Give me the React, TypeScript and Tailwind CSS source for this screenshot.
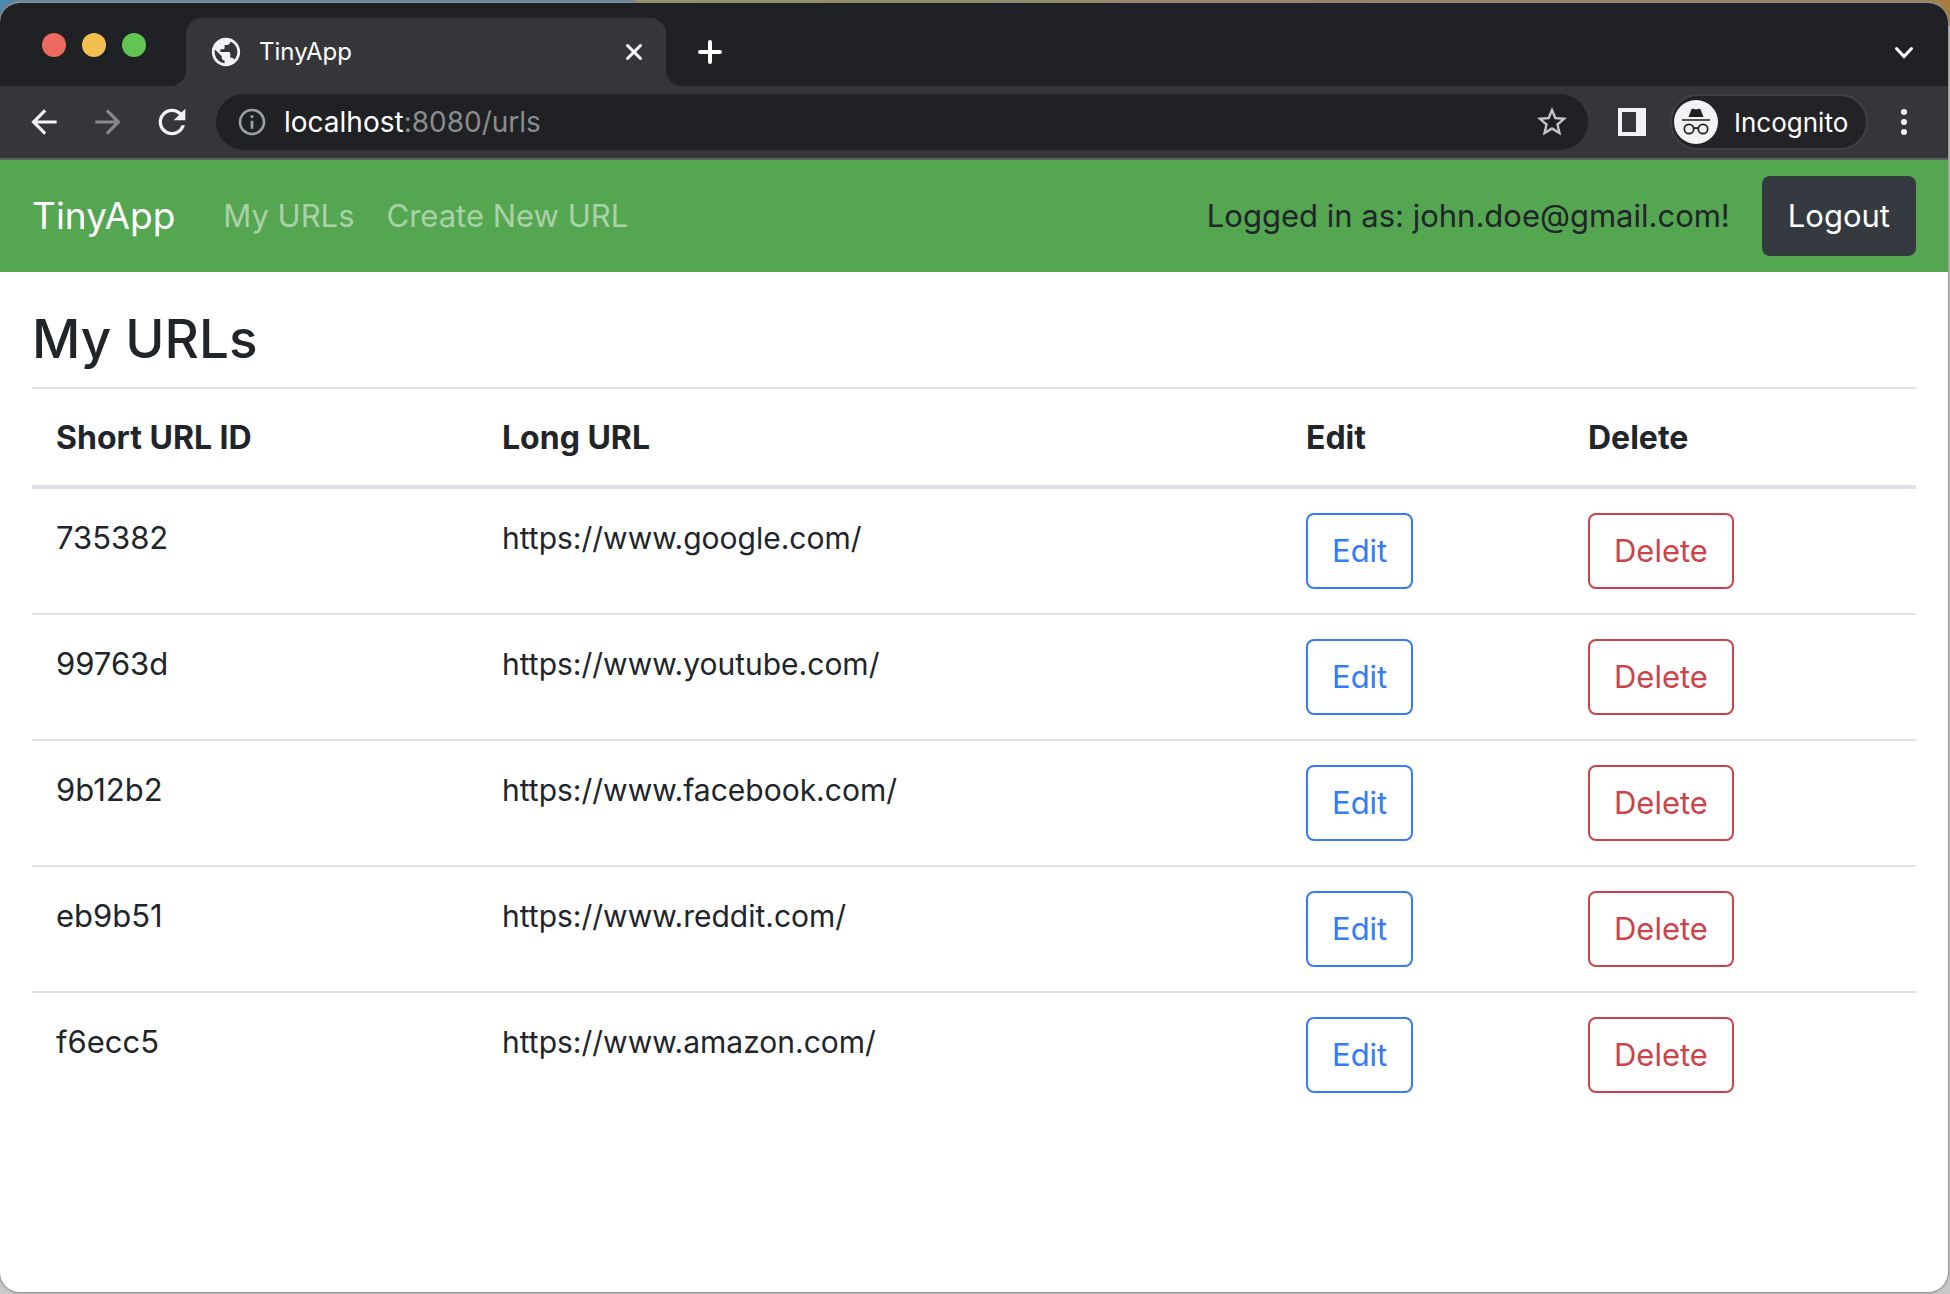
import React from "react";
import { MdPublic, MdArrowBack, MdArrowForward, MdRefresh, MdInfoOutline, MdStarBorder } from "react-icons/md";

const rows = [
  { id: "735382", url: "https://www.google.com/" },
  { id: "99763d", url: "https://www.youtube.com/" },
  { id: "9b12b2", url: "https://www.facebook.com/" },
  { id: "eb9b51", url: "https://www.reddit.com/" },
  { id: "f6ecc5", url: "https://www.amazon.com/" },
];

function TabStrip() {
  return (
    <div className="flex h-[83px] items-stretch bg-[#202124] pr-[27px]">
      <div className="flex w-[170px] items-center gap-4 pl-[42px]">
        <button aria-label="Close window" className="size-6 rounded-full bg-[#ed6a5e]" />
        <button aria-label="Minimize window" className="size-6 rounded-full bg-[#f5bf4f]" />
        <button aria-label="Zoom window" className="size-6 rounded-full bg-[#61c554]" />
      </div>
      <div className="flex w-4 flex-col justify-end">
        <div className="size-4 bg-[#35363a]">
          <div className="size-4 rounded-br-2xl bg-[#202124]" />
        </div>
      </div>
      <div className="mt-[15px] flex w-[480px] items-center rounded-t-2xl bg-[#35363a] px-[23px]">
        <MdPublic className="size-[34px] text-[#f1f3f4]" />
        <span className="ml-4 flex-1 text-2xl text-white">TinyApp</span>
        <button aria-label="Close tab" className="text-white">
          <svg viewBox="0 0 18 18" className="size-[18px]" fill="none" stroke="currentColor" strokeWidth="3" strokeLinecap="round">
            <path d="M2.5 2.5l13 13M15.5 2.500l-13 13" />
          </svg>
        </button>
      </div>
      <div className="flex w-4 flex-col justify-end">
        <div className="size-4 bg-[#35363a]">
          <div className="size-4 rounded-bl-2xl bg-[#202124]" />
        </div>
      </div>
      <button aria-label="New tab" className="mt-[15px] ml-4 text-white">
        <svg viewBox="0 0 24 24" className="size-6" fill="none" stroke="currentColor" strokeWidth="4" strokeLinecap="round">
          <path d="M12 2v20M2 12h20" />
        </svg>
      </button>
      <button aria-label="Search tabs" className="mt-[15px] ml-auto w-[34px] text-white">
        <svg viewBox="0 0 34 20" className="h-5 w-[34px]" fill="none" stroke="currentColor" strokeWidth="3" strokeLinecap="round">
          <path d="M9.500 6.500l7.500 8l7.500-8" />
        </svg>
      </button>
    </div>
  );
}

function IncognitoMark() {
  return (
    <svg viewBox="0 0 44 44" className="size-11" fill="none">
      <circle cx="22" cy="22" r="22" fill="#f1f3f4" />
      <path d="M17.300 9.700q.5-1.400 1.900-.9l2.800.8l2.800-.8q1.400-.5 1.900.9l2.800 7.300H14.500z" fill="#202124" />
      <path d="M8 20h28" stroke="#202124" strokeWidth="1.700" />
      <circle cx="15" cy="29" r="4.700" stroke="#202124" strokeWidth="1.700" />
      <circle cx="29" cy="29" r="4.700" stroke="#202124" strokeWidth="1.700" />
      <path d="M19.700 28.500q2.300-1.300 4.600 0" stroke="#202124" strokeWidth="1.700" />
    </svg>
  );
}

function Toolbar() {
  return (
    <div className="flex h-[74px] items-center border-b-2 border-[#5c5d61] bg-[#35363a] pr-[34px] pl-[25px] text-[#f1f3f4]">
      <button aria-label="Back"><MdArrowBack className="size-[38px]" /></button>
      <button aria-label="Forward" className="ml-[26px] text-[#87888b]"><MdArrowForward className="size-[38px]" /></button>
      <button aria-label="Reload" className="ml-[25px]"><MdRefresh className="size-10" /></button>
      <div className="ml-6 flex h-14 flex-1 items-center rounded-full bg-[#202124] pr-[18px] pl-5">
        <MdInfoOutline className="size-8 text-[#9aa0a6]" />
        <button className="ml-4 flex-1 text-left text-[28px] text-[#8b8c8e]">
          <span className="text-white">localhost</span>:8080/urls
        </button>
        <button aria-label="Bookmark" className="text-[#c3c4c5]"><MdStarBorder className="size-9" /></button>
      </div>
      <button aria-label="Side panel" className="ml-[30px]">
        <svg viewBox="0 0 28 28" className="size-7"><path fillRule="evenodd" fill="currentColor" d="M0 0h28v28H0zM4 4v20h14V4z" /></svg>
      </button>
      <button className="ml-6 flex h-14 w-[198px] items-center rounded-full border-2 border-[#3f4044] bg-[#232327] pl-0.5 text-[26px] text-white">
        <IncognitoMark />
        <span className="ml-4">Incognito</span>
      </button>
      <button aria-label="Menu" className="ml-[26px]">
        <svg viewBox="0 0 20 28" className="h-7 w-5" fill="currentColor">
          <circle cx="10" cy="4" r="3" /><circle cx="10" cy="14" r="3" /><circle cx="10" cy="24" r="3" />
        </svg>
      </button>
    </div>
  );
}

function Navbar() {
  return (
    <nav className="flex h-28 items-center bg-[#54a651] px-8 text-[31px]">
      <a href="#" className="text-[37px] text-white">TinyApp</a>
      <a href="#" className="ml-12 text-white/50">My URLs</a>
      <a href="#" className="ml-8 text-white/50">Create New URL</a>
      <span className="ml-auto text-[#212529]">Logged in as: john.doe@gmail.com!</span>
      <button className="ml-8 h-20 rounded-lg bg-[#343a40] px-[26px] text-white">Logout</button>
    </nav>
  );
}

export default function App() {
  return (
    <div className="flex min-h-screen flex-col bg-[#c8c8c9] font-['Inter',sans-serif]">
      <div className="-mb-[24px] h-[26px] bg-[linear-gradient(to_right,#4f87ad_635px,#a49a55_635px,#a87f3a_70%,#a87f3a_1945px)]" />
      <div className="mr-0.5 mb-0.5 flex flex-1 flex-col overflow-hidden rounded-[20px] border-t border-[#8a8a8a] bg-white shadow-[0_0_2px_1px_#888888]">
        <TabStrip />
        <Toolbar />
        <Navbar />
        <main className="px-8 pt-[34px] text-[31px] leading-[48px] text-[#212529]">
          <h1 className="mb-3.5 text-[53px] leading-[67px] font-medium">My URLs</h1>
          <table className="w-full table-fixed border-collapse text-left">
            <colgroup>
              <col className="w-[446px]" />
              <col />
              <col className="w-[282px]" />
              <col className="w-[352px]" />
            </colgroup>
            <thead>
              <tr className="border-t-2 border-b-4 border-[#dee2e6]">
                {["Short URL ID", "Long URL", "Edit", "Delete"].map((h) => (
                  <th key={h} scope="col" className="px-6 pt-[25px] pb-[23px] text-[32px] font-bold">{h}</th>
                ))}
              </tr>
            </thead>
            <tbody>
              {rows.map((r) => (
                <tr key={r.id} className="border-b-2 border-[#dee2e6] align-top last:border-b-0">
                  <td className="px-6 pt-[25px] pb-[23px]">{r.id}</td>
                  <td className="px-6 pt-[25px] pb-[23px] text-[30px]">{r.url}</td>
                  <td className="p-6">
                    <button className="block h-[76px] rounded-lg border-2 border-[#347bf6] px-6 text-[#347bf6]">Edit</button>
                  </td>
                  <td className="p-6">
                    <button className="block h-[76px] rounded-lg border-2 border-[#cb444a] px-6 text-[#cb444a]">Delete</button>
                  </td>
                </tr>
              ))}
            </tbody>
          </table>
        </main>
      </div>
    </div>
  );
}
